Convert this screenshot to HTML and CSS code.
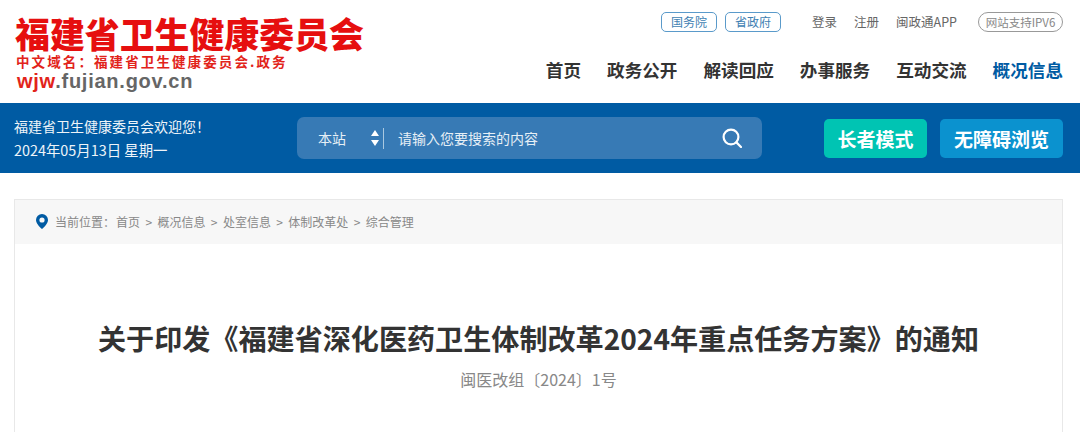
FILE: index.html
```html
<!DOCTYPE html>
<html lang="zh-CN">
<head>
	<meta charset="utf-8">
	<title>关于印发《福建省深化医药卫生体制改革2024年重点任务方案》的通知</title>
	<link rel="stylesheet" href="styles.css">
</head>
<body>
	<header class="header">
		<div class="logo">
			<div class="logo-title">福建省卫生健康委员会</div>
			<div class="logo-cn">中文域名：福建省卫生健康委员会.政务</div>
			<div class="logo-url"><span class="logo-red">wjw</span>.fujian.gov.cn</div>
		</div>
		<div class="header-right">
			<div class="top-links">
				<a class="tag">国务院</a>
				<a class="tag tag-second">省政府</a>
				<a class="top-link top-link-first">登录</a>
				<a class="top-link">注册</a>
				<a class="top-link">闽政通APP</a>
				<span class="ipv6">网站支持IPV6</span>
			</div>
			<nav class="nav">
				<a>首页</a>
				<a>政务公开</a>
				<a>解读回应</a>
				<a>办事服务</a>
				<a>互动交流</a>
				<a class="active">概况信息</a>
			</nav>
		</div>
	</header>

	<div class="bar">
		<div class="welcome">
			<div>福建省卫生健康委员会欢迎您！</div>
			<div class="date">2024年05月13日 星期一</div>
		</div>
		<div class="search">
			<span class="scope">本站</span>
			<svg class="arrows" width="8" height="16" viewBox="0 0 8 16">
				<path d="M4 0 8 6H0zM0 10h8l-4 6z" fill="#fff"/>
			</svg>
			<span class="divider"></span>
			<span class="placeholder">请输入您要搜索的内容</span>
			<svg class="search-icon" width="20" height="20" viewBox="0 0 20 20" fill="none" stroke="#fff" stroke-width="2.2">
				<circle cx="9" cy="9" r="7.4"/>
				<path d="M14.4 14.4 19 19" stroke-linecap="round"/>
			</svg>
		</div>
		<div class="modes">
			<a class="mode mode-green">长者模式</a>
			<a class="mode mode-blue">无障碍浏览</a>
		</div>
	</div>

	<main class="card">
		<div class="crumbs">
			<svg class="pin" width="12" height="15" viewBox="0 0 12 15">
				<path fill-rule="evenodd" d="M6 0a6 6 0 0 1 6 6c0 3.6-3.6 6.8-6 9-2.400-2.200-6-5.400-6-9a6 6 0 0 1 6-6zm0 3.400a2.600 2.600 0 1 0 0 5.200 2.600 2.600 0 0 0 0-5.200z" fill="#005ba3"/>
			</svg>
			<span class="crumbs-label">当前位置：</span>
			<span class="crumbs-path">首页 &gt; 概况信息 &gt; 处室信息 &gt; 体制改革处 &gt; 综合管理</span>
		</div>
		<h1 class="title">关于印发《福建省深化医药卫生体制改革2024年重点任务方案》的通知</h1>
		<p class="doc-no">闽医改组〔2024〕1号</p>
	</main>
</body>
</html>
```

FILE: styles.css
```css
* {
	box-sizing: border-box;
}
html, body {
	height: 432px;
	overflow: hidden;
}
body {
	margin: 0;
	background: #fff;
	color: #333;
	font-family: "Noto Sans CJK SC", "Liberation Sans", sans-serif;
}

/* header */
.header {
	display: flex;
	justify-content: space-between;
	height: 103px;
	padding: 12px 17px 0 15px;
}
.logo {
	margin-top: 1px;
}
.logo-title {
	color: #e60f0f;
	font-size: 34.9px;
	font-weight: 900;
	line-height: 40px;
	white-space: nowrap;
}
.logo-cn {
	padding-left: 1px;
	color: #e2231a;
	font-size: 13.5px;
	font-weight: 700;
	line-height: 16px;
	letter-spacing: 2.1px;
	white-space: nowrap;
}
.logo-url {
	padding-left: 2px;
	color: #666;
	font-family: "Liberation Sans", sans-serif;
	font-size: 20px;
	font-weight: 700;
	line-height: 24px;
	letter-spacing: 0.75px;
}
.logo-red {
	color: #e2231a;
}
.header-right {
	display: flex;
	flex-direction: column;
	align-items: flex-end;
}
.top-links {
	display: flex;
	align-items: center;
	height: 20px;
	font-size: 12.5px;
}
.tag {
	width: 56px;
	height: 20px;
	border: 1px solid #5a9aca;
	border-radius: 5px;
	color: #3f7fb3;
	font-size: 12px;
	line-height: 18px;
	text-align: center;
}
.tag-second {
	margin-left: 8px;
}
.top-link {
	margin-left: 17px;
	color: #666;
	line-height: 18px;
}
.top-link-first {
	margin-left: 31px;
}
.ipv6 {
	width: 85px;
	height: 20px;
	margin-left: 21px;
	border: 1px solid #999;
	border-radius: 10px;
	color: #888;
	font-size: 11.5px;
	line-height: 18px;
	text-align: center;
}
.nav {
	display: flex;
	gap: 26px;
	margin-top: 25px;
	font-size: 17.6px;
	font-weight: 700;
	line-height: 26px;
}
.nav a {
	color: #333;
}
.nav .active {
	color: #005ba3;
}

/* blue bar */
.bar {
	display: flex;
	align-items: center;
	height: 70px;
	padding: 0 17px 0 14px;
	background: #005ba3;
	color: #fff;
}
.welcome {
	width: 283px;
	color: #eef4f9;
	font-size: 14px;
	line-height: 24px;
}
.date {
	font-size: 14.4px;
}
.search {
	display: flex;
	align-items: center;
	width: 465px;
	height: 42px;
	padding: 0 20px 0 21px;
	border-radius: 7px;
	background: #377ab5;
	color: #e6eff6;
	font-size: 14px;
}
.scope {
	width: 53px;
}
.arrows {
	flex: none;
}
.divider {
	width: 1px;
	height: 21px;
	margin-left: 4px;
	background: #a9c8e0;
}
.placeholder {
	flex: 1;
	margin-left: 14px;
}
.modes {
	display: flex;
	gap: 13px;
	margin-left: auto;
}
.mode {
	height: 39px;
	border-radius: 5px;
	color: #fff;
	font-size: 19px;
	font-weight: 700;
	line-height: 39px;
	text-align: center;
}
.mode-green {
	width: 103px;
	background: #00c4b3;
}
.mode-blue {
	width: 123px;
	background: #0b92cf;
}

/* article */
.card {
	height: 233px;
	margin: 26px 17px 0 14px;
	border: 1px solid #e8e8e8;
	border-bottom: 0;
}
.crumbs {
	display: flex;
	align-items: center;
	height: 44px;
	padding: 0 0 1px 21px;
	background: #f7f7f7;
	color: #888;
	font-size: 12px;
}
.pin {
	margin-right: 7px;
}
.crumbs-label {
	margin-right: 1px;
}
.crumbs-path {
	word-spacing: 2.7px;
}
.title {
	margin: 76px 0 0;
	color: #333;
	font-size: 28.1px;
	font-weight: 700;
	line-height: 36px;
	text-align: center;
}
.doc-no {
	margin: 11px 0 0;
	color: #888;
	font-size: 16px;
	line-height: 24px;
	text-align: center;
}
```
